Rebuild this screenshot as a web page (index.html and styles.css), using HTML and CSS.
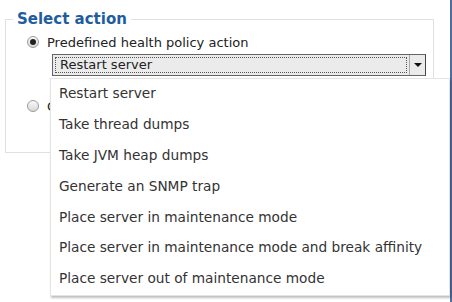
FILE: index.html
```html
<!DOCTYPE html>
<html lang="en">
<head>
    <meta charset="UTF-8">
    <title>Select action</title>
    <link rel="stylesheet" href="styles.css">
</head>
<body>
    <div class="page">
        <fieldset class="actions">
            <legend>Select action</legend>

            <div class="body">
                <div class="option">
                    <span class="radio checked"></span>
                    <span class="label">Predefined health policy action</span>
                </div>

                <div class="picker">
                    <div class="select">
                        <span class="value">Restart server</span>
                        <span class="arrow"></span>
                    </div>

                    <ul class="menu">
                        <li>Restart server</li>
                        <li>Take thread dumps</li>
                        <li>Take JVM heap dumps</li>
                        <li>Generate an SNMP trap</li>
                        <li>Place server in maintenance mode</li>
                        <li>Place server in maintenance mode and break affinity</li>
                        <li>Place server out of maintenance mode</li>
                    </ul>
                </div>

                <div class="option second">
                    <span class="radio"></span>
                    <span class="label">Custom action</span>
                </div>
            </div>
        </fieldset>
    </div>
</body>
</html>
```

FILE: styles.css
```css
body {
    margin: 0;
    font-family: "DejaVu Sans", sans-serif;
    background: #fff;
    color: #333;
}
.page {
    height: 302px;
    border-right: 2px solid #4d6b9c;
    box-sizing: border-box;
    padding: 10px 0 0 5px;
}
.actions {
    width: 429px;
    height: 143px;
    box-sizing: border-box;
    margin: 0;
    padding: 0;
    border: 1px solid #e0e0e0;
}
legend {
    font-size: 15px;
    font-weight: bold;
    color: #1f5d9e;
    padding: 0 4px;
    margin-left: 7px;
}
.body {
    padding-left: 21px;
}
.option {
    display: flex;
    align-items: center;
    gap: 8px;
    height: 24px;
    margin-top: 2px;
}
.option.second {
    margin-top: 18px;
}
.label {
    font-size: 13px;
    color: #222;
}
.radio {
    width: 12px;
    height: 12px;
    border-radius: 50%;
    border: 1px solid #9a9a9a;
    background: linear-gradient(#fafafa, #d8d8d8);
    box-sizing: border-box;
    display: flex;
    align-items: center;
    justify-content: center;
}
.radio.checked::after {
    content: "";
    width: 6px;
    height: 6px;
    border-radius: 50%;
    background: #222;
}
.picker {
    position: relative;
    margin-left: 25px;
}
.select {
    width: 374px;
    height: 22px;
    box-sizing: border-box;
    border: 1px solid #666;
    border-right-color: #444;
    background: #ebebeb;
    display: flex;
}
.value {
    flex: 1;
    margin: 2px;
    border: 1px dotted #555;
    font-size: 13px;
    line-height: 14px;
    padding-left: 4px;
    color: #222;
}
.arrow {
    width: 15px;
    border-left: 1px solid #aaa;
    display: flex;
    align-items: center;
    justify-content: center;
}
.arrow::after {
    content: "";
    border-left: 4px solid transparent;
    border-right: 4px solid transparent;
    border-top: 4px solid #111;
}
.menu {
    position: absolute;
    top: 24px;
    left: -2px;
    width: 398px;
    margin: 0;
    padding: 0;
    list-style: none;
    background: #fff;
    border: 1px solid #e4e4e4;
    box-shadow: 1px 2px 2px rgba(0, 0, 0, 0.25);
    z-index: 2;
}
.menu li {
    height: 30.9px;
    line-height: 28px;
    padding-left: 8px;
    font-size: 13.7px;
    color: #333;
}
```
